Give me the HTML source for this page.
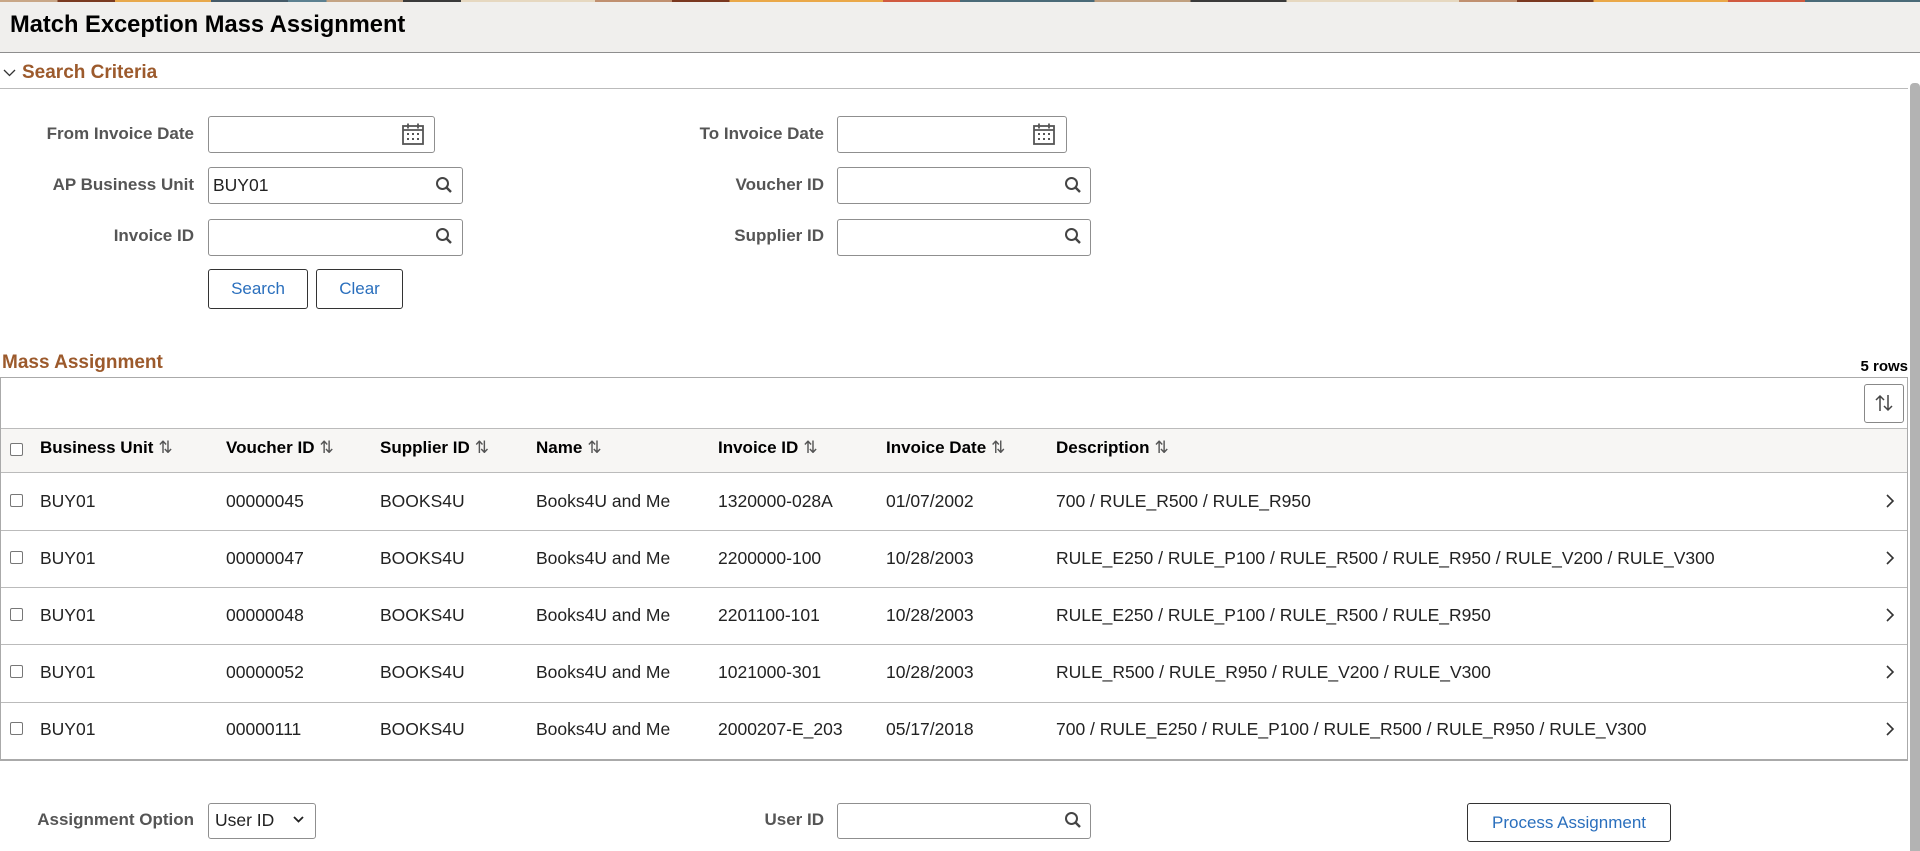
<!DOCTYPE html>
<html><head><meta charset="utf-8">
<style>
*{box-sizing:border-box;margin:0;padding:0}
body{width:1920px;height:851px;overflow:hidden;background:#fff;font-family:"Liberation Sans",Arial,sans-serif;position:relative;color:#222}
.a{position:absolute}
.strip{left:0;top:0;width:1920px;height:2px;background:linear-gradient(90deg,#c9a787 0 3%,#7a3a20 3% 6%,#e8a94c 6% 11%,#455a68 11% 15%,#5c8090 15% 17%,#c4a484 17% 21%,#3a3a3a 21% 24%,#e6d8c0 24% 31%,#c09070 31% 35%,#7a3820 35% 38%,#eaa848 38% 46%,#d05a40 46% 50%,#4a6a78 50% 57%,#c0a080 57% 62%,#3a3a3a 62% 67%,#e6d8c0 67% 76%,#c09070 76% 79%,#7a3820 79% 83%,#eaa848 83% 90%,#d05a40 90% 94%,#4a6a78 94% 100%)}
.titlebar{left:0;top:2px;width:1920px;height:51px;background:#f0efed;border-bottom:1px solid #8e8e8e}
.title{left:10px;top:12px;font-size:23.7px;font-weight:bold;color:#000}
.sec{font-size:19px;font-weight:bold;color:#9c5a2c}
.lbl{font-size:17px;font-weight:bold;color:#555;text-align:right;width:190px}
.inp{border:1px solid #8f8f8f;border-radius:3px;background:#fff;height:37px}
.btn{border:1px solid #333;border-radius:3px;background:#fff;color:#2a6fbd;font-size:17px;text-align:center}
.hd{font-size:17px;font-weight:bold;color:#000;top:438px}
.cell{font-size:17.5px;color:#222}
.cb{width:13px;height:13px;border:1px solid #777;border-radius:2px;background:#fff}
.sep{left:1px;width:1906px;height:1px;background:#bbb}
.srt{font-weight:normal;color:#555;font-size:17px;margin-left:5px}
</style></head><body>
<div class="a strip"></div>
<div class="a titlebar"></div>
<div class="a title">Match Exception Mass Assignment</div>

<svg class="a" style="left:3px;top:68px" width="13" height="10" viewBox="0 0 13 10"><path d="M1 2l5.5 5.5L12 2" fill="none" stroke="#333" stroke-width="1.3"/></svg>
<div class="a sec" style="left:22px;top:62px">Search Criteria</div>
<div class="a" style="left:0;top:88px;width:1908px;height:1px;background:#bbb"></div>

<div class="a lbl" style="left:4px;top:124px">From Invoice Date</div>
<div class="a inp" style="left:208px;top:116px;width:227px"></div>
<svg class="a" style="left:401px;top:122px" width="24" height="24" viewBox="0 0 24 24"><rect x="2" y="4" width="20" height="18" fill="none" stroke="#555" stroke-width="1.8"/><path d="M2 8h20M7 1.5v5M17 1.5v5" stroke="#555" stroke-width="1.8"/><g fill="#555"><rect x="6" y="11" width="2" height="2"/><rect x="11" y="11" width="2" height="2"/><rect x="16" y="11" width="2" height="2"/><rect x="6" y="16" width="2" height="2"/><rect x="11" y="16" width="2" height="2"/><rect x="16" y="16" width="2" height="2"/></g></svg>

<div class="a lbl" style="left:4px;top:175px">AP Business Unit</div>
<div class="a inp" style="left:208px;top:167px;width:255px"></div>
<div class="a cell" style="left:213px;top:175px">BUY01</div>
<svg class="a" style="left:435px;top:176px" width="18" height="18" viewBox="0 0 18 18"><circle cx="7.5" cy="7.5" r="5.5" fill="none" stroke="#444" stroke-width="2"/><path d="M11.5 11.5L16 16" stroke="#444" stroke-width="2.4"/></svg>

<div class="a lbl" style="left:4px;top:226px">Invoice ID</div>
<div class="a inp" style="left:208px;top:219px;width:255px"></div>
<svg class="a" style="left:435px;top:227px" width="18" height="18" viewBox="0 0 18 18"><circle cx="7.5" cy="7.5" r="5.5" fill="none" stroke="#444" stroke-width="2"/><path d="M11.5 11.5L16 16" stroke="#444" stroke-width="2.4"/></svg>

<div class="a btn" style="left:208px;top:269px;width:100px;height:40px;line-height:38px">Search</div>
<div class="a btn" style="left:316px;top:269px;width:87px;height:40px;line-height:38px">Clear</div>

<div class="a lbl" style="left:634px;top:124px">To Invoice Date</div>
<div class="a inp" style="left:837px;top:116px;width:230px"></div>
<svg class="a" style="left:1032px;top:122px" width="24" height="24" viewBox="0 0 24 24"><rect x="2" y="4" width="20" height="18" fill="none" stroke="#555" stroke-width="1.8"/><path d="M2 8h20M7 1.5v5M17 1.5v5" stroke="#555" stroke-width="1.8"/><g fill="#555"><rect x="6" y="11" width="2" height="2"/><rect x="11" y="11" width="2" height="2"/><rect x="16" y="11" width="2" height="2"/><rect x="6" y="16" width="2" height="2"/><rect x="11" y="16" width="2" height="2"/><rect x="16" y="16" width="2" height="2"/></g></svg>

<div class="a lbl" style="left:634px;top:175px">Voucher ID</div>
<div class="a inp" style="left:837px;top:167px;width:254px"></div>
<svg class="a" style="left:1064px;top:176px" width="18" height="18" viewBox="0 0 18 18"><circle cx="7.5" cy="7.5" r="5.5" fill="none" stroke="#444" stroke-width="2"/><path d="M11.5 11.5L16 16" stroke="#444" stroke-width="2.4"/></svg>

<div class="a lbl" style="left:634px;top:226px">Supplier ID</div>
<div class="a inp" style="left:837px;top:219px;width:254px"></div>
<svg class="a" style="left:1064px;top:227px" width="18" height="18" viewBox="0 0 18 18"><circle cx="7.5" cy="7.5" r="5.5" fill="none" stroke="#444" stroke-width="2"/><path d="M11.5 11.5L16 16" stroke="#444" stroke-width="2.4"/></svg>

<div class="a sec" style="left:2px;top:352px">Mass Assignment</div>
<div class="a" style="left:1820px;top:358px;font-size:15px;font-weight:bold;color:#000;width:88px;text-align:right">5 rows</div>
<div class="a" style="left:0;top:377px;width:1908px;height:384px;border:1px solid #aaa;border-bottom:2px solid #aaa"></div>
<div class="a" style="left:1864px;top:384px;width:40px;height:39px;border:1px solid #888;border-radius:3px;background:#fff"></div>
<svg class="a" style="left:1874px;top:393px" width="20" height="20" viewBox="0 0 20 20"><path d="M6 18V3M2 7l4-4 4 4M14 2v15M10 13l4 4 4-4" fill="none" stroke="#444" stroke-width="1.5"/></svg>
<div class="a" style="left:1px;top:428px;width:1906px;height:45px;background:#f7f6f4;border-top:1px solid #bbb;border-bottom:1px solid #bbb"></div>
<div class="a cb" style="left:10px;top:443px"></div>
<div class="a hd" style="left:40px">Business Unit<span class="srt">⇅</span></div>
<div class="a hd" style="left:226px">Voucher ID<span class="srt">⇅</span></div>
<div class="a hd" style="left:380px">Supplier ID<span class="srt">⇅</span></div>
<div class="a hd" style="left:536px">Name<span class="srt">⇅</span></div>
<div class="a hd" style="left:718px">Invoice ID<span class="srt">⇅</span></div>
<div class="a hd" style="left:886px">Invoice Date<span class="srt">⇅</span></div>
<div class="a hd" style="left:1056px">Description<span class="srt">⇅</span></div>

<div class="a sep" style="top:530px"></div>
<div class="a sep" style="top:587px"></div>
<div class="a sep" style="top:644px"></div>
<div class="a sep" style="top:702px"></div>

<div class="a cb" style="left:10px;top:494px"></div>
<div class="a cell" style="left:40px;top:491px">BUY01</div><div class="a cell" style="left:226px;top:491px">00000045</div><div class="a cell" style="left:380px;top:491px">BOOKS4U</div><div class="a cell" style="left:536px;top:491px">Books4U and Me</div><div class="a cell" style="left:718px;top:491px">1320000-028A</div><div class="a cell" style="left:886px;top:491px">01/07/2002</div><div class="a cell" style="left:1056px;top:491px">700 / RULE_R500 / RULE_R950</div>

<div class="a cb" style="left:10px;top:551px"></div>
<div class="a cell" style="left:40px;top:548px">BUY01</div><div class="a cell" style="left:226px;top:548px">00000047</div><div class="a cell" style="left:380px;top:548px">BOOKS4U</div><div class="a cell" style="left:536px;top:548px">Books4U and Me</div><div class="a cell" style="left:718px;top:548px">2200000-100</div><div class="a cell" style="left:886px;top:548px">10/28/2003</div><div class="a cell" style="left:1056px;top:548px">RULE_E250 / RULE_P100 / RULE_R500 / RULE_R950 / RULE_V200 / RULE_V300</div>

<div class="a cb" style="left:10px;top:608px"></div>
<div class="a cell" style="left:40px;top:605px">BUY01</div><div class="a cell" style="left:226px;top:605px">00000048</div><div class="a cell" style="left:380px;top:605px">BOOKS4U</div><div class="a cell" style="left:536px;top:605px">Books4U and Me</div><div class="a cell" style="left:718px;top:605px">2201100-101</div><div class="a cell" style="left:886px;top:605px">10/28/2003</div><div class="a cell" style="left:1056px;top:605px">RULE_E250 / RULE_P100 / RULE_R500 / RULE_R950</div>

<div class="a cb" style="left:10px;top:665px"></div>
<div class="a cell" style="left:40px;top:662px">BUY01</div><div class="a cell" style="left:226px;top:662px">00000052</div><div class="a cell" style="left:380px;top:662px">BOOKS4U</div><div class="a cell" style="left:536px;top:662px">Books4U and Me</div><div class="a cell" style="left:718px;top:662px">1021000-301</div><div class="a cell" style="left:886px;top:662px">10/28/2003</div><div class="a cell" style="left:1056px;top:662px">RULE_R500 / RULE_R950 / RULE_V200 / RULE_V300</div>

<div class="a cb" style="left:10px;top:722px"></div>
<div class="a cell" style="left:40px;top:719px">BUY01</div><div class="a cell" style="left:226px;top:719px">00000111</div><div class="a cell" style="left:380px;top:719px">BOOKS4U</div><div class="a cell" style="left:536px;top:719px">Books4U and Me</div><div class="a cell" style="left:718px;top:719px">2000207-E_203</div><div class="a cell" style="left:886px;top:719px">05/17/2018</div><div class="a cell" style="left:1056px;top:719px">700 / RULE_E250 / RULE_P100 / RULE_R500 / RULE_R950 / RULE_V300</div>

<svg class="a" style="left:1884px;top:493px" width="12" height="16" viewBox="0 0 12 16"><path d="M3 2l6 6-6 6" fill="none" stroke="#333" stroke-width="1.6"/></svg>
<svg class="a" style="left:1884px;top:550px" width="12" height="16" viewBox="0 0 12 16"><path d="M3 2l6 6-6 6" fill="none" stroke="#333" stroke-width="1.6"/></svg>
<svg class="a" style="left:1884px;top:607px" width="12" height="16" viewBox="0 0 12 16"><path d="M3 2l6 6-6 6" fill="none" stroke="#333" stroke-width="1.6"/></svg>
<svg class="a" style="left:1884px;top:664px" width="12" height="16" viewBox="0 0 12 16"><path d="M3 2l6 6-6 6" fill="none" stroke="#333" stroke-width="1.6"/></svg>
<svg class="a" style="left:1884px;top:721px" width="12" height="16" viewBox="0 0 12 16"><path d="M3 2l6 6-6 6" fill="none" stroke="#333" stroke-width="1.6"/></svg>

<div class="a lbl" style="left:4px;top:810px">Assignment Option</div>
<div class="a inp" style="left:208px;top:803px;width:108px;height:36px"></div>
<div class="a cell" style="left:215px;top:810px">User ID</div>
<svg class="a" style="left:292px;top:815px" width="13" height="10" viewBox="0 0 13 10"><path d="M2 2l4.5 4.5L11 2" fill="none" stroke="#222" stroke-width="1.8"/></svg>

<div class="a lbl" style="left:634px;top:810px">User ID</div>
<div class="a inp" style="left:837px;top:803px;width:254px;height:36px"></div>
<svg class="a" style="left:1064px;top:811px" width="18" height="18" viewBox="0 0 18 18"><circle cx="7.5" cy="7.5" r="5.5" fill="none" stroke="#444" stroke-width="2"/><path d="M11.5 11.5L16 16" stroke="#444" stroke-width="2.4"/></svg>

<div class="a btn" style="left:1467px;top:803px;width:204px;height:39px;line-height:37px">Process Assignment</div>

<div class="a" style="left:1910px;top:83px;width:10px;height:768px;background:#b3b3b3;border-radius:4px 4px 0 0"></div>
</body></html>
